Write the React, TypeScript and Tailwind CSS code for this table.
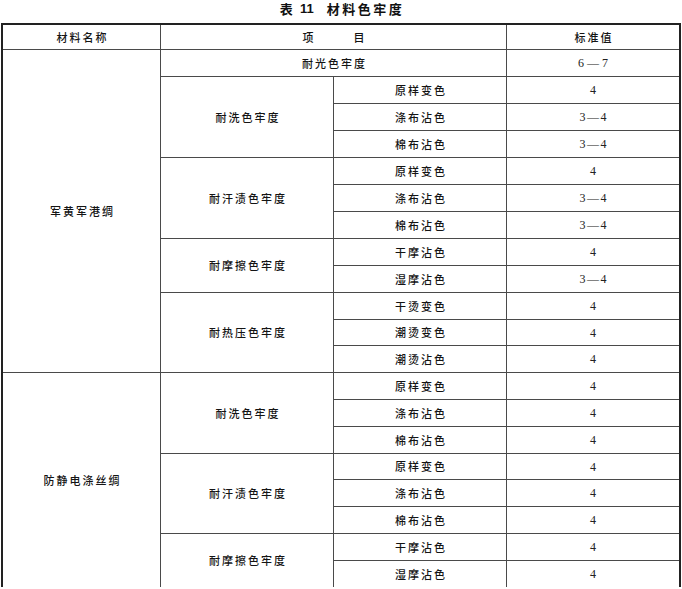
import { Fragment } from "react";

type Test = { name: string; items: [string, string][] };

const material1: Test[] = [
  {
    name: "耐洗色牢度",
    items: [
      ["原样变色", "4"],
      ["涤布沾色", "3—4"],
      ["棉布沾色", "3—4"],
    ],
  },
  {
    name: "耐汗渍色牢度",
    items: [
      ["原样变色", "4"],
      ["涤布沾色", "3—4"],
      ["棉布沾色", "3—4"],
    ],
  },
  {
    name: "耐摩擦色牢度",
    items: [
      ["干摩沾色", "4"],
      ["湿摩沾色", "3—4"],
    ],
  },
  {
    name: "耐热压色牢度",
    items: [
      ["干烫变色", "4"],
      ["潮烫变色", "4"],
      ["潮烫沾色", "4"],
    ],
  },
];

const material2: Test[] = [
  {
    name: "耐洗色牢度",
    items: [
      ["原样变色", "4"],
      ["涤布沾色", "4"],
      ["棉布沾色", "4"],
    ],
  },
  {
    name: "耐汗渍色牢度",
    items: [
      ["原样变色", "4"],
      ["涤布沾色", "4"],
      ["棉布沾色", "4"],
    ],
  },
  {
    name: "耐摩擦色牢度",
    items: [
      ["干摩沾色", "4"],
      ["湿摩沾色", "4"],
    ],
  },
];

const cell = "flex items-center justify-center bg-white";
const zh = "text-[11px] font-medium leading-none tracking-[2px] pl-[2px] text-[#141414]";
const num = "font-['Liberation_Serif',serif] text-[12px] leading-none tracking-[1.5px] pl-[1.5px] text-[#222]";

function TestRows({ tests }: { tests: Test[] }) {
  return (
    <>
      {tests.map((t) => (
        <Fragment key={t.name}>
          <div className={`${cell} ${t.items.length === 3 ? "row-span-3" : "row-span-2"}`}>
            <span className={zh}>{t.name}</span>
          </div>
          {t.items.map(([item, value]) => (
            <Fragment key={item}>
              <div className={cell}>
                <span className={zh}>{item}</span>
              </div>
              <div className={cell}>
                <span className={num}>{value}</span>
              </div>
            </Fragment>
          ))}
        </Fragment>
      ))}
    </>
  );
}

export default function App() {
  return (
    <div className="w-[682px] h-[589px] overflow-hidden bg-white font-['Noto_Sans_CJK_SC',sans-serif]">
      {/* Title */}
      <div className="h-[23px] flex justify-center pt-[2px] pl-[2px] text-[13px] font-bold leading-[14px] text-[#111]">
        <span>表</span>
        <span className="ml-[7px] font-['Liberation_Sans',sans-serif]">11</span>
        <span className="ml-[13px] tracking-[2.5px]">材料色牢度</span>
      </div>

      {/* Table */}
      <div className="ml-[1px] w-[680px] border-l-2 border-t-2 border-r-2 border-[#222] bg-[#4a4a4a]">
        <div className="grid grid-cols-[157px_172px_172px_172px] grid-rows-[24px_repeat(10,26px)_25px_repeat(4,26px)_25px_repeat(4,26px)] gap-px">
          <div className={cell}>
            <span className={zh}>材料名称</span>
          </div>
          <div className={`${cell} col-span-2`}>
            <span className={zh}>项</span>
            <span className={`${zh} ml-[36px]`}>目</span>
          </div>
          <div className={cell}>
            <span className={zh}>标准值</span>
          </div>

          <div className={`${cell} row-span-12`}>
            <span className={zh}>军黄军港绸</span>
          </div>
          <div className={`${cell} col-span-2`}>
            <span className={zh}>耐光色牢度</span>
          </div>
          <div className={cell}>
            <span className={`${num} tracking-[3px] pl-[3px]`}>6—7</span>
          </div>
          <TestRows tests={material1} />

          <div className={`${cell} row-span-8`}>
            <span className={zh}>防静电涤丝绸</span>
          </div>
          <TestRows tests={material2} />
        </div>
      </div>
    </div>
  );
}
